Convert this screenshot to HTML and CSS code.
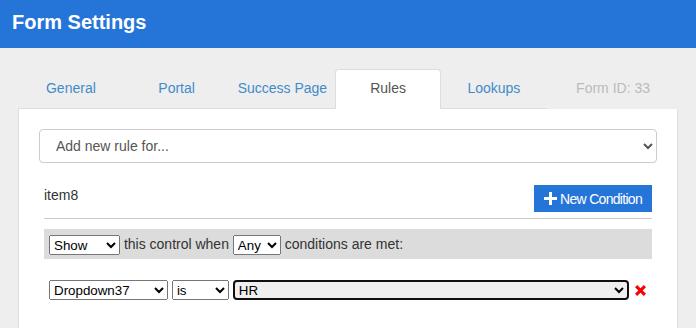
FILE: index.html
```html
<!DOCTYPE html>
<html lang="en">
<head>
<meta charset="utf-8">
<title>Form Settings</title>
<link rel="stylesheet" href="styles.css">
</head>
<body>
<header class="topbar">Form Settings</header>
<main class="page">
  <nav class="tabs">
    <a class="tab">General</a>
    <a class="tab">Portal</a>
    <a class="tab">Success Page</a>
    <span class="tab tab-active">Rules</span>
    <a class="tab">Lookups</a>
    <span class="form-id">Form ID: 33</span>
  </nav>
  <section class="panel">
    <select class="rule-select">
      <option>Add new rule for...</option>
    </select>
    <div class="rule">
      <div class="rule-head">
        <span class="rule-name">item8</span>
        <button class="btn-new" type="button"><svg class="plus" width="13" height="13" viewBox="0 0 13 13"><path d="M5 0h3v5h5v3H8v5H5V8H0V5h5z" fill="#fff"/></svg>New Condition</button>
      </div>
      <div class="rule-bar">
        <select class="sel sel-action"><option>Show</option><option>Disable</option></select>
        this control when
        <select class="sel sel-any"><option>Any</option><option>All</option></select>
        conditions are met:
      </div>
      <div class="cond-row">
        <select class="sel sel-field"><option>Dropdown37</option></select>
        <select class="sel sel-op"><option>is</option><option>is not</option></select>
        <select class="sel sel-value sel-focus"><option>HR</option></select>
        <svg class="remove" width="11" height="11" viewBox="0 0 11 11"><path d="M0 2.2L2.2 0L5.5 3.3L8.8 0L11 2.2L7.7 5.5L11 8.8L8.8 11L5.5 7.7L2.2 11L0 8.8L3.3 5.5z" fill="#f00"/></svg>
      </div>
    </div>
  </section>
</main>
</body>
</html>
```
FILE: styles.css
```css
* { box-sizing: border-box; }
html, body { margin: 0; }
body {
  background: #eeeeee;
  font-family: "Liberation Sans", Arial, sans-serif;
  font-size: 14px;
  color: #333;
}
.topbar {
  height: 48px;
  background: #2575d9;
  color: #fff;
  font-weight: bold;
  font-size: 20px;
  line-height: 24px;
  padding: 10px 12px 0;
}
.page {
  padding: 21px 18px 0;
}
.tabs {
  display: flex;
  height: 40px;
}
.tab {
  width: 105.75px;
  flex: none;
  text-align: center;
  line-height: 20px;
  padding-top: 9px;
  color: #428bca;
  border-bottom: 1px solid #ddd;
}
.tab-active {
  background: #fff;
  color: #555;
  border: 1px solid #ddd;
  border-bottom-color: #fff;
  border-radius: 4px 4px 0 0;
  padding-top: 8px;
}
.form-id {
  margin-left: auto;
  padding: 9px 28px 0 0;
  line-height: 20px;
  color: #bbb;
}
.panel {
  background: #fff;
  border: 1px solid #ddd;
  border-top: 0;
  padding: 20px 20px 40px;
  min-height: 230px;
}
.rule-select {
  display: block;
  width: 100%;
  height: 34px;
  border: 1px solid #ccc;
  border-radius: 4px;
  padding: 0 12px;
  background: #fff;
  color: #555;
  font-family: "Liberation Sans", Arial, sans-serif;
  font-size: 14px;
}
.rule {
  margin: 22px 5px 0;
}
.rule-head {
  display: flex;
  justify-content: space-between;
  align-items: flex-start;
  padding-bottom: 6px;
  border-bottom: 1px solid #ccc;
}
.rule-name {
  line-height: 20px;
  color: #333;
}
.btn-new {
  display: flex;
  align-items: center;
  gap: 3px;
  height: 27px;
  padding: 0 10px;
  border: 0;
  background: #2575d9;
  color: #fff;
  font-family: "Liberation Sans", Arial, sans-serif;
  font-size: 14px;
  letter-spacing: -0.7px;
  line-height: 20px;
}
.plus { display: block; margin-top: -1px; }
.rule-bar {
  margin-top: 10px;
  height: 30px;
  padding: 5px;
  background: #dcdcdc;
  line-height: 20px;
  color: #333;
}
.cond-row {
  margin-top: 20px;
  padding-left: 5px;
  line-height: 20px;
}
.sel {
  font-family: "Liberation Sans", Arial, sans-serif;
  font-size: 13.333px;
  height: 20px;
  vertical-align: middle;
  color: #000;
}
.sel-action { width: 71px; }
.sel-any { width: 48px; }
.sel-field { width: 119px; }
.sel-op { width: 57px; }
.sel-value { width: 396px; }
.sel-focus {
  border: 2px solid #101010;
  border-radius: 4px;
}
.remove {
  vertical-align: middle;
  margin-left: 2px;
}
```
